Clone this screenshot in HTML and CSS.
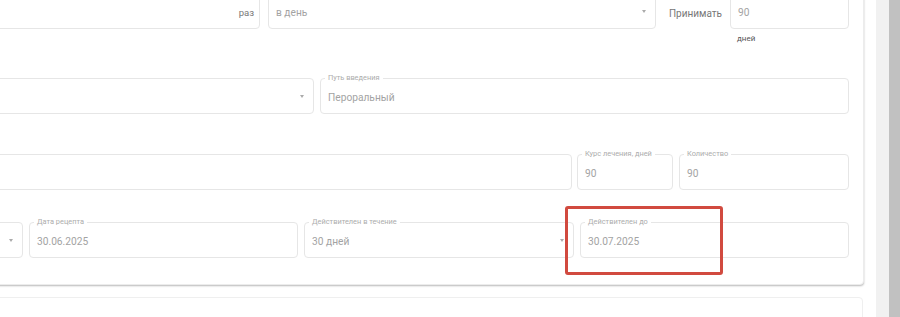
FILE: index.html
```html
<!DOCTYPE html>
<html lang="ru">
<head>
<meta charset="utf-8">
<title>Рецепт</title>
<link rel="stylesheet" href="styles.css">
</head>
<body>
<div class="page">
  <div class="content">
    <div class="card">
      <div class="row row-1">
        <div class="field f-grow field-right"><span class="suffix">раз</span></div>
        <div class="field w-388 select"><span class="value">в день</span><span class="arrow"></span></div>
        <div class="inline-label">Принимать</div>
        <div class="col w-119">
          <div class="field"><span class="value">90</span></div>
          <div class="hint">дней</div>
        </div>
      </div>
      <div class="row row-2">
        <div class="field f-grow select"><span class="value"></span><span class="arrow"></span></div>
        <div class="field w-529"><span class="label">Путь введения</span><span class="value">Пероральный</span></div>
      </div>
      <div class="row row-3">
        <div class="field f-grow"></div>
        <div class="field w-96 ml-5"><span class="label">Курс лечения, дней</span><span class="value">90</span></div>
        <div class="field w-170"><span class="label">Количество</span><span class="value">90</span></div>
      </div>
      <div class="row row-4">
        <div class="field f-grow select"><span class="value"></span><span class="arrow"></span></div>
        <div class="field w-269"><span class="label">Дата рецепта</span><span class="value">30.06.2025</span></div>
        <div class="field w-270 select"><span class="label">Действителен в течение</span><span class="value">30 дней</span><span class="arrow"></span></div>
        <div class="field w-269"><span class="label">Действителен до</span><span class="value">30.07.2025</span></div>
      </div>
    </div>
    <div class="card card-next"></div>
  </div>
  <div class="scrollbar">
    <div class="track"></div>
    <div class="thumb"></div>
  </div>
  <div class="highlight"></div>
</div>
</body>
</html>
```
FILE: styles.css
```css
* { box-sizing: border-box; }
html, body { margin: 0; padding: 0; background: #fff; }
body {
  font-family: Roboto, "Noto Sans", "Liberation Sans", sans-serif;
  width: 900px;
  height: 317px;
  overflow: hidden;
}
.page {
  position: relative;
  display: flex;
  width: 900px;
  height: 317px;
  overflow: hidden;
}
.content {
  width: 876px;
  flex: none;
}
.card {
  margin: -16px 12px 0 -20px;
  background: #fff;
  border: 1px solid #ececec;
  border-radius: 4px;
  box-shadow: 0 1px 2px rgba(0, 0, 0, 0.28);
  padding: 8px 14px 26px 14px;
}
.card-next {
  margin: 12px 13px 0 -20px;
  height: 60px;
  box-shadow: none;
  border-color: #efefef;
}
.row {
  display: flex;
  gap: 6px;
  align-items: flex-start;
}
.row-1 { gap: 0; margin-bottom: 34px; }
.row-2 { margin-bottom: 40px; }
.row-3 { gap: 6px; margin-bottom: 32px; }
.field {
  position: relative;
  height: 36px;
  border: 1px solid #e6e6e6;
  border-radius: 4px;
  display: flex;
  align-items: center;
  padding: 3px 7px 0 7px;
  font-size: 10.2px;
  color: #a3a3a3;
  background: #fff;
}
.f-grow { flex: 1; min-width: 0; }
.row-1 .f-grow { margin-right: 8px; }
.row-3 .ml-5 { margin-left: -1px; }
.w-388 { width: 388px; flex: none; }
.w-119 { width: 119px; flex: none; }
.w-529 { width: 529px; flex: none; }
.w-96 { width: 96px; flex: none; }
.w-170 { width: 170px; flex: none; }
.w-269 { width: 269px; flex: none; }
.w-270 { width: 270px; flex: none; }
.field-right { justify-content: flex-end; padding-right: 5px; }
.suffix { color: #777; font-size: 9.5px; }
.value { white-space: nowrap; }
.select .arrow {
  position: absolute;
  right: 9px;
  top: 16px;
  width: 0;
  height: 0;
  border-left: 2.5px solid transparent;
  border-right: 2.5px solid transparent;
  border-top: 3px solid #ababab;
}
.label {
  position: absolute;
  top: -6px;
  left: 4px;
  padding: 0 3px;
  background: #fff;
  font-size: 7.4px;
  line-height: 10px;
  color: #acacac;
  white-space: nowrap;
}
.inline-label {
  width: 74px;
  flex: none;
  height: 36px;
  padding: 4px 8px 0 0;
  display: flex;
  align-items: center;
  justify-content: flex-end;
  font-size: 10px;
  color: #777;
  white-space: nowrap;
}
.col { display: flex; flex-direction: column; }
.hint {
  margin-top: 5px;
  padding-left: 7px;
  font-size: 8px;
  line-height: 10px;
  color: #555;
}
.scrollbar {
  width: 24px;
  flex: none;
  display: flex;
}
.track { width: 13px; background: #f1f1f1; }
.thumb { width: 11px; background: #c1c1c1; }
.highlight {
  position: absolute;
  left: 565px;
  top: 206px;
  width: 158px;
  height: 69px;
  border: 3px solid #d14a3f;
  border-radius: 3px;
}
```
